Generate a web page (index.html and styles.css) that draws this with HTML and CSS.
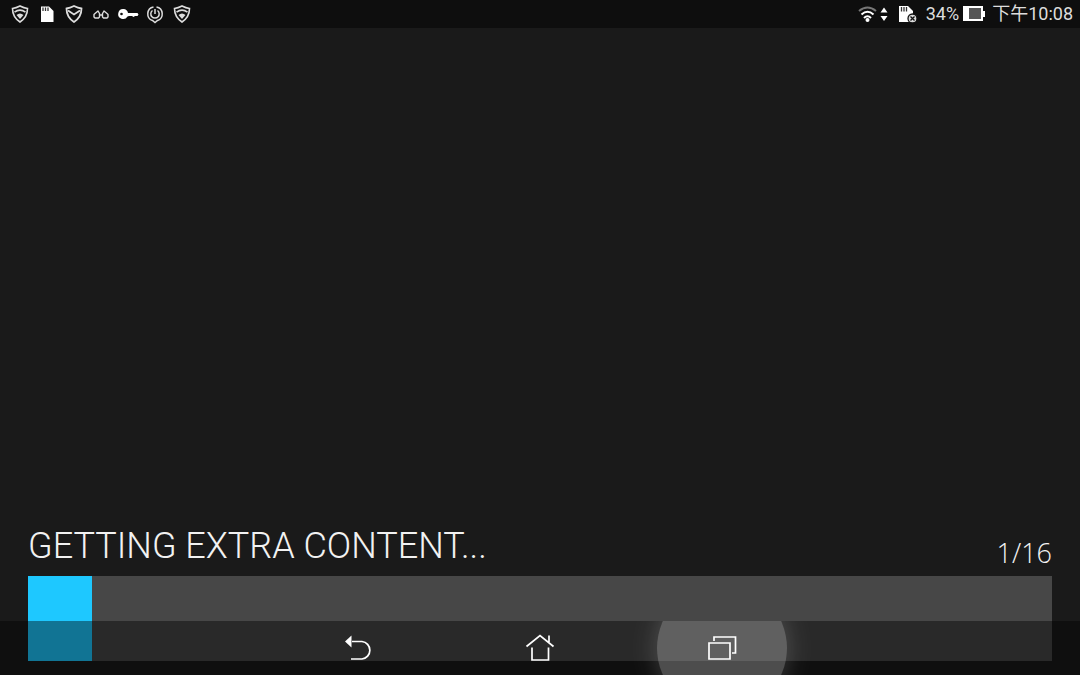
FILE: index.html
```html
<!DOCTYPE html>
<html lang="zh-TW">
<head>
    <meta charset="UTF-8">
    <meta name="viewport" content="width=device-width, initial-scale=1.0">
    <title>Getting extra content</title>
    <link rel="stylesheet" href="styles.css">
</head>
<body>
    <header class="status-bar">
        <div class="notifications">
            <svg width="18" height="20" viewBox="0 0 18 20" fill="none" stroke="#ddd" stroke-width="1.6">
                <path d="M9 2Q13 4 16.500 4.500Q16.500 13 9 18Q1.500 13 1.500 4.500Q5 4 9 2Z"/>
                <path d="M3.500 8.200Q9 4 14.500 8.200"/>
                <path d="M5.500 11Q9 8 12.500 11L9 15Z" fill="#ddd" stroke="none"/>
            </svg>
            <svg width="18" height="20" viewBox="0 0 18 20">
                <path d="M3 2.500H11L15.500 7V18H3Z" fill="#fff"/>
                <path d="M5 3.500V7M7.500 3.500V7M10 3.500V7" stroke="#333" stroke-width="1.3"/>
            </svg>
            <svg width="18" height="20" viewBox="0 0 18 20" fill="none" stroke="#ddd" stroke-width="1.8">
                <path d="M9 2Q13 4 16.500 4.500Q16.500 13 9 18Q1.500 13 1.500 4.500Q5 4 9 2Z"/>
                <path d="M3 6.500L9 10.500L15 6.500"/>
            </svg>
            <svg width="18" height="20" viewBox="0 0 18 20" fill="none" stroke="#ddd" stroke-width="1.4" stroke-linejoin="round">
                <path d="M3 9.500L6 7L7.500 9.500V13L6.500 14H3L2 13V10.500ZM15 9.500L12 7L10.500 9.500V13L11.500 14H15L16 13V10.500ZM8 11H10"/>
            </svg>
            <svg class="key" width="22" height="20" viewBox="0 0 22 20">
                <path d="M6.500 5A5 5 0 1 0 10.500 12.500L12 12H15L16.500 13L18 12H20.500L21.500 10.500L20.500 9H11A5 5 0 0 0 6.500 5Z" fill="#fff"/>
                <circle cx="4.500" cy="10" r="1.3" fill="#111"/>
            </svg>
            <svg width="18" height="20" viewBox="0 0 18 20" fill="none" stroke="#ddd" stroke-width="1.5">
                <path d="M7.500 3A7 7 0 0 0 6.500 16.500L9 18.500L11.500 16.500A7 7 0 0 0 10.500 3"/>
                <path d="M6.500 6.500A4.200 4.200 0 1 0 11.500 6.500M9 5V10"/>
            </svg>
            <svg width="18" height="20" viewBox="0 0 18 20" fill="none" stroke="#ddd" stroke-width="1.6">
                <path d="M9 2Q13 4 16.500 4.500Q16.500 13 9 18Q1.500 13 1.500 4.500Q5 4 9 2Z"/>
                <path d="M3.500 8.200Q9 4 14.500 8.200"/>
                <path d="M5.500 11Q9 8 12.500 11L9 15Z" fill="#ddd" stroke="none"/>
            </svg>
        </div>
        <div class="system">
            <svg width="30" height="20" viewBox="0 0 30 20" fill="none" stroke-width="2">
                <path d="M1 7Q9.500 0 18 7" stroke="#777"/>
                <path d="M3.500 10.500Q9.500 5 15.500 10.500M6 14Q9.500 10.500 13 14" stroke="#fff"/>
                <circle cx="9.500" cy="16" r="2" fill="#fff"/>
                <path d="M22.500 8.500L26 3.500L29.500 8.500ZM22.500 12L26 17L29.500 12Z" fill="#fff"/>
            </svg>
            <svg class="card" width="20" height="20" viewBox="0 0 20 20">
                <path d="M1 2H10L15 7V18H1Z" fill="#fff"/>
                <path d="M3.500 3V7.500M6 3V7.500M8.500 3V7.500" stroke="#333" stroke-width="1.3"/>
                <circle cx="14.500" cy="14.500" r="4.500" fill="#ddd" stroke="#111" stroke-width="1.3"/>
                <path d="M12.500 12.500L16.500 16.500M16.500 12.500L12.500 16.500" stroke="#111" stroke-width="1.3"/>
            </svg>
            <span>34%</span>
            <svg class="battery" width="22" height="20" viewBox="0 0 22 20">
                <path d="M0 2H20V7H22V13H20V17H0Z" fill="#fff"/>
                <path d="M6 4H18V15H6Z" fill="#555"/>
            </svg>
            <time>下午10:08</time>
        </div>
    </header>

    <main class="download">
        <div class="download-text">
            <label for="progress">GETTING EXTRA CONTENT...</label>
            <span class="count">1/16</span>
        </div>
        <progress id="progress" value="1" max="16"></progress>
    </main>

    <nav class="nav-bar">
        <button type="button" aria-label="Back">
            <svg width="30" height="30" viewBox="0 0 30 30" fill="none" stroke="#fff" stroke-width="1.7">
                <path d="M9 8.500H19A8.800 8.800 0 0 1 19 26H8"/>
                <path d="M2 8.500L8.500 2.500V14.500Z" fill="#fff" stroke="none"/>
            </svg>
        </button>
        <button type="button" aria-label="Home">
            <svg width="30" height="30" viewBox="0 0 30 30" fill="none" stroke="#fff" stroke-width="1.7">
                <path d="M1.500 13.500L15 2.500L28.500 13.500M24 9V2.500M7 14.500V27H23.500V14.500"/>
            </svg>
        </button>
        <button type="button" class="pressed" aria-label="Recent apps">
            <svg width="30" height="30" viewBox="0 0 30 30" fill="none" stroke="#fff" stroke-width="1.7">
                <path d="M2 10H23V26H2ZM7 8V4H28.500V20H25"/>
            </svg>
        </button>
    </nav>
</body>
</html>
```
FILE: styles.css
```css
body {
    margin: 0;
    min-height: 100vh;
    display: flex;
    flex-direction: column;
    background: #1a1a1a;
    color: #f2f2f2;
    font-family: Roboto, "Noto Sans CJK TC", sans-serif;
}
svg {
    display: block;
}
.status-bar {
    display: flex;
    justify-content: space-between;
    height: 28px;
    padding: 0 7px 0 11px;
    background: #0e0e0e;
}
.notifications,
.system {
    display: flex;
    align-items: center;
}
.notifications {
    gap: 9px;
}
.key {
    margin: 0 -2px;
}
.system {
    font-size: 18px;
    line-height: 28px;
    color: #ddd;
}
.card {
    margin: 0 8px 0 10px;
}
.battery {
    margin: 0 7px 0 4px;
}
.download {
    flex: 1;
    display: flex;
    flex-direction: column;
    justify-content: flex-end;
    padding: 0 28px 14px;
}
.download-text {
    display: flex;
    justify-content: space-between;
    align-items: flex-end;
    padding-bottom: 8px;
}
.download-text label {
    font-size: 36px;
    font-weight: 300;
    line-height: 44px;
}
.count {
    font-family: "Open Sans", sans-serif;
    font-size: 27px;
    font-weight: 300;
    line-height: 30px;
}
progress {
    display: block;
    width: 100%;
    height: 85px;
    border: none;
    background: #474747;
    appearance: none;
}
progress::-webkit-progress-bar {
    background: #474747;
}
progress::-webkit-progress-value {
    background: #1ec8ff;
}
.nav-bar {
    position: fixed;
    left: 0;
    right: 0;
    bottom: 0;
    display: flex;
    justify-content: center;
    gap: 52px;
    height: 54px;
    background: rgba(0, 0, 0, 0.42);
    overflow: hidden;
}
.nav-bar button {
    position: relative;
    display: flex;
    justify-content: center;
    align-items: center;
    width: 130px;
    padding: 0;
    border: none;
    background: none;
    cursor: pointer;
}
.nav-bar svg {
    position: relative;
}
/* touch ripple */
.pressed::before {
    content: "";
    position: absolute;
    top: 50%;
    left: 50%;
    width: 130px;
    height: 130px;
    border-radius: 50%;
    background: rgba(255, 255, 255, 0.26);
    box-shadow: 0 0 26px rgba(255, 255, 255, 0.2);
    transform: translate(-50%, -50%);
}
```
